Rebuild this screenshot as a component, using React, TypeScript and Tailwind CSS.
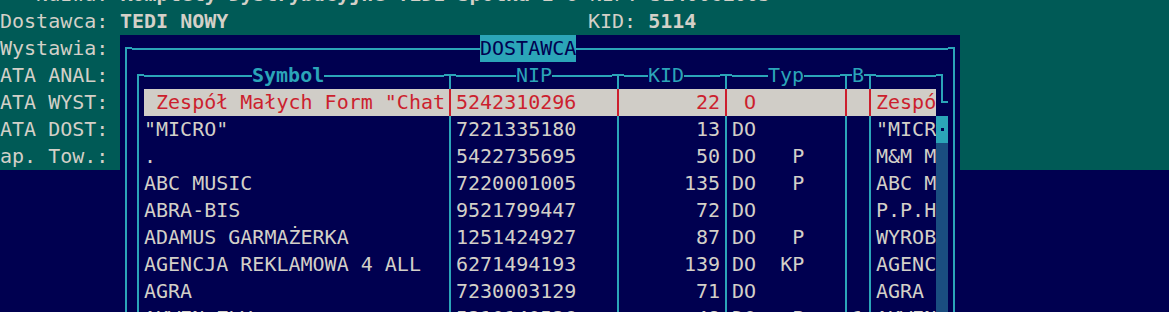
import React from "react";

type Row = {
  sym: string;
  nip: string;
  kid: string;
  typ: string;
  b: string;
  name: string;
};

const rows: Row[] = [
  { sym: '"MICRO"', nip: "7221335180", kid: "13", typ: "DO", b: "", name: '"MICR' },
  { sym: ".", nip: "5422735695", kid: "50", typ: "DO   P", b: "", name: "M&M M" },
  { sym: "ABC MUSIC", nip: "7220001005", kid: "135", typ: "DO   P", b: "", name: "ABC M" },
  { sym: "ABRA-BIS", nip: "9521799447", kid: "72", typ: "DO", b: "", name: "P.P.H" },
  { sym: "ADAMUS GARMAŻERKA", nip: "1251424927", kid: "87", typ: "DO   P", b: "", name: "WYROB" },
  { sym: "AGENCJA REKLAMOWA 4 ALL", nip: "6271494193", kid: "139", typ: "DO  KP", b: "", name: "AGENC" },
  { sym: "AGRA", nip: "7230003129", kid: "71", typ: "DO", b: "", name: "AGRA" },
  { sym: "AKWEN-ZŁY", nip: "5210140526", kid: "48", typ: "DO   P", b: "1", name: "AKWEN" },
];

const labels = ["Wystawia:", "ATA ANAL:", "ATA WYST:", "ATA DOST:", "ap. Tow.:"];

// box-drawing glyph in one 12x27 cell
const Box = ({ u, d, l, r }: { u?: boolean; d?: boolean; l?: boolean; r?: boolean }) => (
  <svg width="12" height="27" className="shrink-0 block" stroke="#2ba5b8" strokeWidth="2">
    {u && <line x1="6" y1="0" x2="6" y2="14" />}
    {d && <line x1="6" y1="12" x2="6" y2="27" />}
    {l && <line x1="0" y1="13" x2="7" y2="13" />}
    {r && <line x1="5" y1="13" x2="12" y2="13" />}
  </svg>
);

const V = ({ red }: { red?: boolean }) => (
  <div className="flex w-[12px] shrink-0 justify-center">
    <div className={red ? "h-full w-[2px] bg-[#cc1f2e]" : "h-full w-[2px] bg-[#2ba5b8]"} />
  </div>
);

const H = ({ w }: { w: string }) => (
  <div className={`flex shrink-0 items-center ${w}`}>
    <div className="h-[2px] w-full bg-[#2ba5b8]" />
  </div>
);

const Side = ({ children, teal }: { children?: React.ReactNode; teal: boolean }) => (
  <div
    className={
      teal
        ? "w-[120px] shrink-0 whitespace-pre bg-[#005a56] text-[#d3d0c8]"
        : "w-[120px] shrink-0 bg-[#000050]"
    }
  >
    {children}
  </div>
);

const Rest = ({ teal }: { teal: boolean }) => (
  <div className={teal ? "flex-1 bg-[#005a56]" : "flex-1 bg-[#000050]"} />
);

const App = () => {
  return (
    <div className="h-[312px] w-[1169px] overflow-hidden bg-[#000050] font-['DejaVu_Sans_Mono',monospace] text-[20px] leading-[27px] text-[#d3d0c8]">
      <div className="mt-[-19px]">
        {/* form behind the popup */}
        <div className="flex h-[27px] whitespace-pre bg-[#005a56]">
          <span>{"   Nazwa: "}</span>
          <span className="font-bold">{"Komplety Dystrybucyjne TEDI Spółka z o "}</span>
          <span>{"NIP: "}</span>
          <span className="font-bold">5140061005</span>
        </div>
        <div className="flex h-[27px] whitespace-pre bg-[#005a56]">
          <span className="w-[120px]">Dostawca:</span>
          <span className="w-[468px] font-bold">TEDI NOWY</span>
          <span>{"KID: "}</span>
          <span className="font-bold">5114</span>
        </div>

        {/* outer frame top */}
        <div className="flex h-[27px]">
          <Side teal>{labels[0]}</Side>
          <div className="flex w-[840px] shrink-0 bg-[#000050]">
            <Box r d />
            <H w="w-[348px]" />
            <span className="w-[96px] shrink-0 bg-[#2ba5b8] text-[#000050]">DOSTAWCA</span>
            <H w="w-[372px]" />
            <Box l d />
          </div>
          <Rest teal />
        </div>

        {/* header of the list */}
        <div className="flex h-[27px]">
          <Side teal>{labels[1]}</Side>
          <div className="flex w-[840px] shrink-0 bg-[#000050] text-[#2ba5b8]">
            <V />
            <Box r d />
            <H w="w-[108px]" />
            <span className="w-[72px] shrink-0 font-bold">Symbol</span>
            <H w="w-[120px]" />
            <Box l r d />
            <H w="w-[60px]" />
            <span className="w-[36px] shrink-0">NIP</span>
            <H w="w-[60px]" />
            <Box l r d />
            <H w="w-[24px]" />
            <span className="w-[36px] shrink-0">KID</span>
            <H w="w-[36px]" />
            <Box l r d />
            <H w="w-[36px]" />
            <span className="w-[36px] shrink-0">Typ</span>
            <H w="w-[36px]" />
            <Box l r d />
            <span className="w-[12px] shrink-0">B</span>
            <Box l r d />
            <H w="w-[60px]" />
            <Box l d />
            <V />
          </div>
          <Rest teal />
        </div>

        {/* selected row */}
        <div className="flex h-[27px]">
          <Side teal>{labels[2]}</Side>
          <div className="flex w-[840px] shrink-0 bg-[#000050]">
            <V />
            <V />
            <div className="flex w-[792px] shrink-0 whitespace-pre bg-[#d0cdc7] text-[#cc1f2e]">
              <span className="w-[300px] shrink-0 overflow-hidden">{' Zespół Małych Form "Chat'}</span>
              <V red />
              <span className="w-[156px] shrink-0">5242310296</span>
              <V red />
              <span className="w-[96px] shrink-0 text-right">22</span>
              <V red />
              <span className="w-[108px] shrink-0">{" O"}</span>
              <V red />
              <span className="w-[12px] shrink-0" />
              <V red />
              <span className="w-[60px] shrink-0 overflow-hidden">Zespó</span>
            </div>
            <Box u r />
            <V />
          </div>
          <Rest teal />
        </div>

        {rows.map((row, i) => {
          const teal = i < 2;
          return (
            <div key={row.nip} className="flex h-[27px]">
              <Side teal={teal}>{labels[i + 3]}</Side>
              <div className="flex w-[840px] shrink-0 whitespace-pre bg-[#000050]">
                <V />
                <V />
                <span className="w-[300px] shrink-0 overflow-hidden">{row.sym}</span>
                <V />
                <span className="w-[156px] shrink-0">{row.nip}</span>
                <V />
                <span className="w-[96px] shrink-0 text-right">{row.kid}</span>
                <V />
                <span className="w-[108px] shrink-0">{row.typ}</span>
                <V />
                <span className="w-[12px] shrink-0">{row.b}</span>
                <V />
                <span className="w-[60px] shrink-0 overflow-hidden">{row.name}</span>
                {i === 0 ? (
                  <div className="flex w-[12px] shrink-0 items-center justify-center bg-[#2ba5b8]">
                    <div className="h-[3px] w-[3px] bg-[#000050]" />
                  </div>
                ) : (
                  <div className="w-[12px] shrink-0 bg-[#1a4e80]" />
                )}
                <V />
              </div>
              <Rest teal={teal} />
            </div>
          );
        })}
      </div>
    </div>
  );
};

export default App;
